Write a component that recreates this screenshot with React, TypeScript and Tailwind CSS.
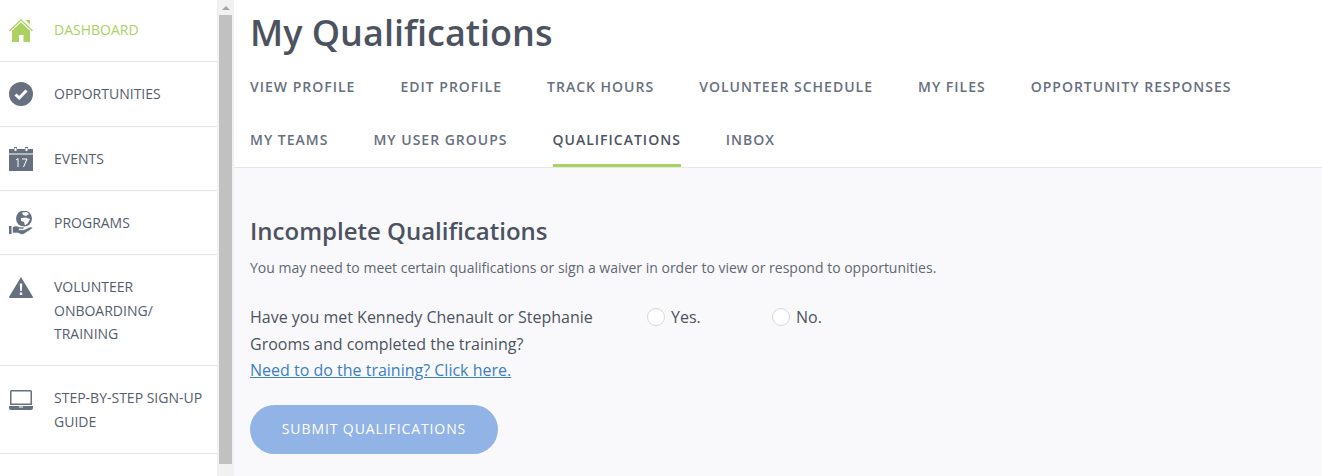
const navItems = [
  { label: "DASHBOARD", icon: "home", h: "h-[62px]", textPt: "pt-[18px]", iconPt: "pt-[19px]", active: true },
  { label: "OPPORTUNITIES", icon: "check", h: "h-[65px]", textPt: "pt-[20px]", iconPt: "pt-[20px]" },
  { label: "EVENTS", icon: "calendar", h: "h-[64px]", textPt: "pt-[20px]", iconPt: "pt-[20px]" },
  { label: "PROGRAMS", icon: "globe", h: "h-[64px]", textPt: "pt-[20px]", iconPt: "pt-[20px]" },
  { label: "VOLUNTEER ONBOARDING/ TRAINING", icon: "warning", h: "h-[111px]", textPt: "pt-[20px]", iconPt: "pt-[22px]" },
  { label: "STEP-BY-STEP SIGN-UP GUIDE", icon: "laptop", h: "h-[88px]", textPt: "pt-[20px]", iconPt: "pt-[24px]" },
];

const tabs = [
  "VIEW PROFILE",
  "EDIT PROFILE",
  "TRACK HOURS",
  "VOLUNTEER SCHEDULE",
  "MY FILES",
  "OPPORTUNITY RESPONSES",
  "MY TEAMS",
  "MY USER GROUPS",
  "QUALIFICATIONS",
  "INBOX",
];

const NavIcon = ({ name }: { name: string }) => {
  if (name === "home")
    return (
      <svg viewBox="0 0 24 23" className="w-[24px] h-[23px]" fill="#aad162">
        <path d="M12 0 L24 11.5 L23 12.3 L12 1.8 L1 12.3 L0 11.5 Z" />
        <path d="M16.5 1 H21 V5.5 Z" />
        <path d="M12 3.2 L21 11.8 V23 H14.5 V16 H10 V23 H3 V11.8 Z" />
      </svg>
    );
  if (name === "check")
    return (
      <svg viewBox="0 0 24 24" className="w-[24px] h-[24px]">
        <circle cx="12" cy="12" r="12" fill="#67707e" />
        <path d="M6.5 12.5 L10.2 16 L17.5 8.5" fill="none" stroke="#fff" strokeWidth="3" />
      </svg>
    );
  if (name === "calendar")
    return (
      <svg viewBox="0 0 24 24" className="w-[24px] h-[24px]">
        <path d="M0 2 H5 V0 H8 V2 H16 V0 H19 V2 H24 V24 H0 Z" fill="#67707e" />
        <rect x="5.5" y="1" width="2" height="3" fill="#fff" />
        <rect x="16.5" y="1" width="2" height="3" fill="#fff" />
        <rect x="0" y="6.5" width="24" height="1" fill="#fff" />
        <path d="M7 13 L9 11.5 V20 M13 12 H18 L14.5 20" fill="none" stroke="#fff" strokeWidth="1" />
      </svg>
    );
  if (name === "globe")
    return (
      <svg viewBox="0 0 24 24" className="w-[24px] h-[24px]">
        <circle cx="15" cy="7.5" r="8" fill="#67707e" />
        <path d="M13 1.5 L18 1 L20 3 L17 5 L14 4 Z M12 7 L17 6.5 L21 8 L19 12 L16 14.5 L15 11 L12 10 Z" fill="#fff" />
        <path d="M3.5 16 C6 14.5 8 14.5 10 16 H14 C15.5 16 15.5 18 14 18 H10 V18.7 H15 L21 16 C23.5 15.5 24 17 22.5 18 L15 23 C13 24 11 23 9 22 H3.5 Z" fill="#67707e" stroke="#fff" strokeWidth="0.6" />
        <rect x="0" y="15" width="2.5" height="8" fill="#67707e" />
      </svg>
    );
  if (name === "warning")
    return (
      <svg viewBox="0 0 24 21" className="w-[24px] h-[21px]" fill="#67707e">
        <path fillRule="evenodd" d="M12 0 L24 20 L23.5 21 H0.5 L0 20 Z M10.8 6.5 L11.2 14 H12.8 L13.2 6.5 Z M10.8 15.5 V18 H13.2 V15.5 Z" />
      </svg>
    );
  return (
    <svg viewBox="0 0 24 20" className="w-[24px] h-[20px]" fill="#67707e">
      <path fillRule="evenodd" d="M2.5 0 H21.5 Q23 0 23 1.5 V15 H1 V1.5 Q1 0 2.5 0 Z M2.5 1.5 V13.5 H21.5 V1.5 Z" />
      <path fillRule="evenodd" d="M0 16 H24 V18 Q24 20 22 20 H2 Q0 20 0 18 Z M10 16.5 V17.5 H14 V16.5 Z" />
    </svg>
  );
};

const Sidebar = () => (
  <div className="w-[217px] shrink-0 bg-white">
    {navItems.map((item) => (
      <div
        key={item.label}
        className={`${item.h} flex items-start border-b border-[#e6e6e6] pl-[9px] pr-[8px]`}
      >
        <div className={`w-[45px] shrink-0 ${item.iconPt}`}>
          <NavIcon name={item.icon} />
        </div>
        <div
          className={`${item.textPt} text-[14px] leading-[23.5px] ${
            item.active ? "text-[#aad162]" : "text-[#555e6c]"
          }`}
        >
          {item.label}
        </div>
      </div>
    ))}
  </div>
);

const FakeScrollbar = () => (
  <div className="w-[17px] shrink-0 flex flex-col items-center bg-[#f1f1f1]">
    <div className="h-[15px] w-full flex items-center justify-center">
      <div className="w-0 h-0 border-x-[4px] border-x-transparent border-b-[4px] border-b-[#a3a3a3]" />
    </div>
    <div className="h-[449px] w-[13px] bg-[#c1c1c1]" />
  </div>
);

const Radio = ({ label, className }: { label: string; className: string }) => (
  <label className={`flex items-center ${className}`}>
    <span className="w-[18px] h-[18px] rounded-full bg-white border border-[#d8d8d8] mr-[6px]" />
    {label}
  </label>
);

export default function App() {
  return (
    <div
      className="h-[476px] w-[1322px] flex overflow-hidden bg-white"
      style={{ fontFamily: '"Open Sans", sans-serif' }}
    >
      <Sidebar />
      <FakeScrollbar />
      <div className="flex-1 min-w-0 flex flex-col">
        <div className="h-[168px] shrink-0 border-b border-[#e6e6e6] pl-[16px]">
          <h1 className="text-[36px] leading-[50px] font-semibold text-[#4c5360] pt-[8px] h-[60px]">
            My Qualifications
          </h1>
          <div className="flex flex-wrap gap-x-[45px] pt-[1px]">
            {tabs.map((tab) => (
              <div
                key={tab}
                className={`h-[53px] pt-[16px] text-[14px] leading-[20px] font-semibold tracking-[1px] ${
                  tab === "QUALIFICATIONS"
                    ? "text-[#4c5360] border-b-[3px] border-[#aad162]"
                    : "text-[#67707e]"
                } ${tab === "OPPORTUNITY RESPONSES" ? "mr-[60px]" : ""}`}
              >
                {tab}
              </div>
            ))}
          </div>
        </div>
        <div className="flex-1 bg-[#f9f9fb] pl-[16px] pt-[46px] text-[#4c5360]">
          <h2 className="text-[24px] leading-[34px] font-semibold">Incomplete Qualifications</h2>
          <p className="text-[14px] leading-[20px] mt-[10px] text-[#5f6774]">
            You may need to meet certain qualifications or sign a waiver in order to view or respond to opportunities.
          </p>
          <div className="flex mt-[26px] text-[16px] leading-[26.5px]">
            <div className="w-[397px] shrink-0">
              Have you met Kennedy Chenault or Stephanie Grooms and completed the training?
              <a className="block text-[#3c7fc4] underline">Need to do the training? Click here.</a>
            </div>
            <div className="flex items-start h-[26px]">
              <Radio label="Yes." className="w-[125px]" />
              <Radio label="No." className="" />
            </div>
          </div>
          <button className="mt-[21px] w-[248px] h-[49px] pb-[2px] rounded-full bg-[#91b3e6] text-white text-[14px] font-medium tracking-[0.9px]">
            SUBMIT QUALIFICATIONS
          </button>
        </div>
      </div>
    </div>
  );
}
